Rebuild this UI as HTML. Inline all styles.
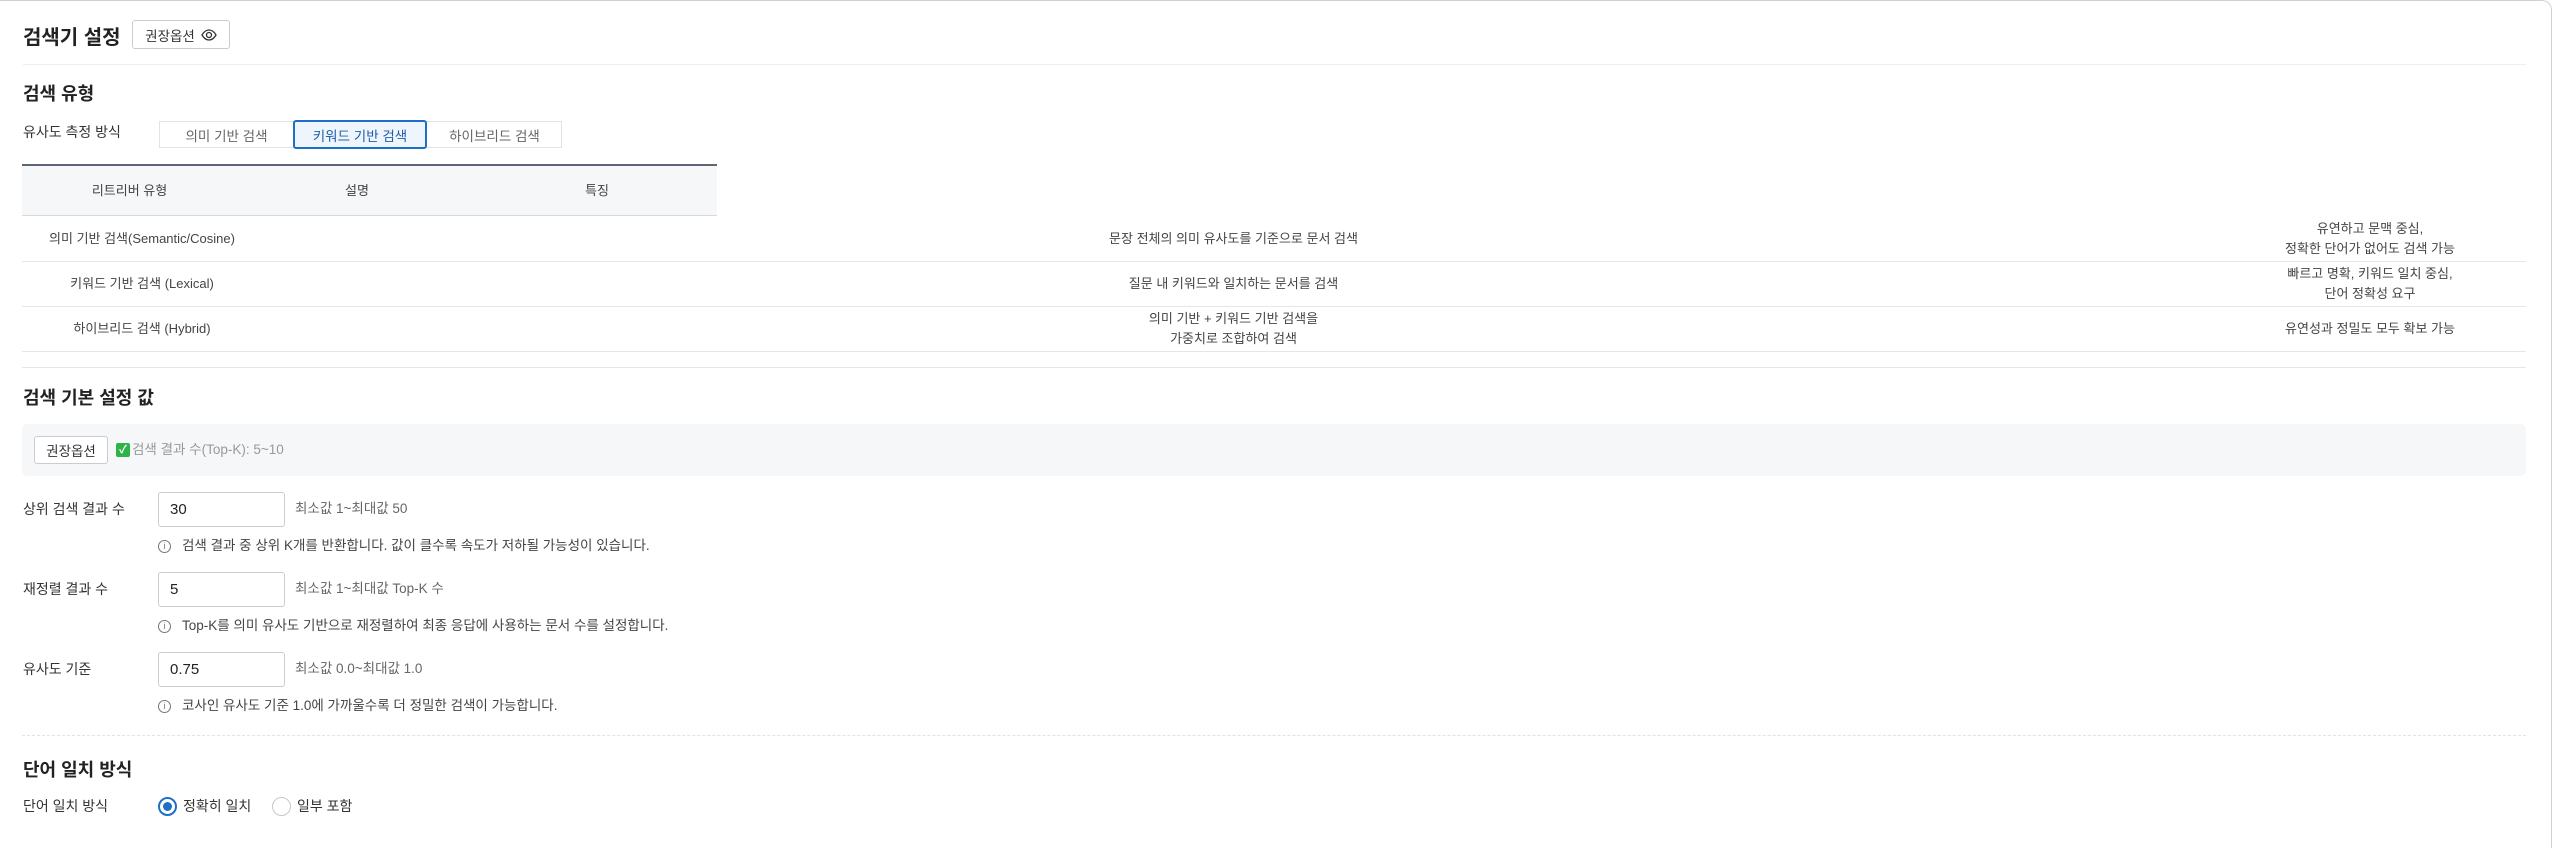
<!DOCTYPE html>
<html style="overflow:hidden;height:848px"><head><meta charset="utf-8"><style>
*{box-sizing:border-box;margin:0;padding:0}
body{width:2554px;height:848px;background:#fff;font-family:"Liberation Sans","Noto Sans CJK KR",sans-serif;color:#333;position:relative;overflow:hidden}
.abs{position:absolute;white-space:nowrap}
.frame{position:absolute;left:-4px;top:0;width:2556px;height:848px;border:1.5px solid #cdd2da;border-bottom:none;border-top-right-radius:10px}
.h1{font-size:20px;font-weight:bold;color:#222}
.h2{font-size:18px;font-weight:bold;color:#222}
.lbl{font-size:14px;color:#333;line-height:20px}
.btn{position:absolute;border:1px solid #c9cdd3;border-radius:3px;background:#fff;font-size:13.5px;color:#333;display:flex;align-items:center;justify-content:center}
.line{position:absolute;height:1px;background:#e3e6ea}
.cell{position:absolute;font-size:13px;color:#444;text-align:center;line-height:20px;display:flex;align-items:center;justify-content:center}
.inp{position:absolute;width:127px;height:35px;border:1px solid #c9cdd3;border-radius:3px;font-size:15px;color:#222;padding-left:11px;line-height:33px}
.hint{font-size:13.5px;color:#666;line-height:20px}
.info{font-size:13.5px;color:#444;display:flex;align-items:center;line-height:20px}
.ic{display:inline-block;width:13px;height:13px;border:1px solid #777;border-radius:50%;font-size:9px;line-height:11px;text-align:center;color:#777;margin-right:11px}
.tab{position:absolute;top:121px;height:27px;font-size:13.5px;color:#666;display:flex;align-items:center;justify-content:center}
</style></head><body>
<div class="frame"></div>
<div class="abs h1" style="left:23px;top:21px">검색기 설정</div>
<div class="btn" style="left:132px;top:20px;width:98px;height:29px;gap:6px">권장옵션 <svg width="16" height="12" viewBox="0 0 16 12"><path d="M1 6C3 2.5 5.5 1 8 1s5 1.5 7 5c-2 3.5-4.5 5-7 5S3 9.5 1 6z" fill="none" stroke="#333" stroke-width="1.3"/><circle cx="8" cy="6" r="2.5" fill="none" stroke="#333" stroke-width="1.3"/></svg></div>
<div class="line" style="left:23px;top:64px;width:2503px;background:#eceef1"></div>
<div class="abs h2" style="left:23px;top:80px">검색 유형</div>
<div class="abs lbl" style="left:23px;top:122px">유사도 측정 방식</div>
<div style="position:absolute;left:159px;top:121px;width:403px;height:27px;border:1px solid #e0e3e8"></div>
<div class="tab" style="left:159px;width:135px">의미 기반 검색</div>
<div class="tab" style="left:293px;top:120px;width:134px;height:29px;border:2px solid #1f6fc5;border-radius:3px;background:#eef5fd;color:#1f5fa8">키워드 기반 검색</div>
<div class="tab" style="left:427px;width:135px">하이브리드 검색</div>
<div style="position:absolute;left:22px;top:164px;width:695px;height:52px;background:#f6f7f9;border-top:2px solid #5d6677;border-bottom:1px solid #d5d9df"></div>
<div class="cell" style="left:22px;top:165px;width:215px;height:51px">리트리버 유형</div>
<div class="cell" style="left:237px;top:165px;width:240px;height:51px">설명</div>
<div class="cell" style="left:477px;top:165px;width:240px;height:51px">특징</div>
<div class="cell" style="left:22px;top:216px;width:240px;height:45px">의미 기반 검색(Semantic/Cosine)</div>
<div class="cell" style="left:262px;top:216px;width:1943px;height:45px">문장 전체의 의미 유사도를 기준으로 문서 검색</div>
<div class="cell" style="left:2205px;top:216px;width:330px;height:45px">유연하고 문맥 중심,<br>정확한 단어가 없어도 검색 가능</div>
<div class="line" style="left:22px;top:261px;width:2504px"></div>
<div class="cell" style="left:22px;top:261px;width:240px;height:45px">키워드 기반 검색 (Lexical)</div>
<div class="cell" style="left:262px;top:261px;width:1943px;height:45px">질문 내 키워드와 일치하는 문서를 검색</div>
<div class="cell" style="left:2205px;top:261px;width:330px;height:45px">빠르고 명확, 키워드 일치 중심,<br>단어 정확성 요구</div>
<div class="line" style="left:22px;top:306px;width:2504px"></div>
<div class="cell" style="left:22px;top:306px;width:240px;height:45px">하이브리드 검색 (Hybrid)</div>
<div class="cell" style="left:262px;top:306px;width:1943px;height:45px">의미 기반 + 키워드 기반 검색을<br>가중치로 조합하여 검색</div>
<div class="cell" style="left:2205px;top:306px;width:330px;height:45px">유연성과 정밀도 모두 확보 가능</div>
<div class="line" style="left:22px;top:351px;width:2504px"></div>
<div class="line" style="left:22px;top:367px;width:2504px"></div>
<div class="abs h2" style="left:23px;top:384px">검색 기본 설정 값</div>
<div style="position:absolute;left:22px;top:424px;width:2504px;height:52px;background:#f6f7f9;border-radius:5px"></div>
<div class="btn" style="left:34px;top:436px;width:74px;height:28px">권장옵션</div>
<div class="abs" style="left:116px;top:440px;font-size:13.5px;color:#999;display:flex;align-items:center;gap:2px;line-height:20px"><span style="display:inline-block;width:14px;height:14px;background:#2eb24a;border-radius:2px;color:#fff;font-size:11px;line-height:14px;text-align:center;font-weight:bold">✓</span>검색 결과 수(Top-K): 5~10</div>

<div class="abs lbl" style="left:23px;top:499px">상위 검색 결과 수</div>
<div class="inp" style="left:158px;top:492px">30</div>
<div class="abs hint" style="left:295px;top:499px">최소값 1~최대값 50</div>
<div class="abs info" style="left:158px;top:536px"><span class="ic">i</span>검색 결과 중 상위 K개를 반환합니다. 값이 클수록 속도가 저하될 가능성이 있습니다.</div>

<div class="abs lbl" style="left:23px;top:579px">재정렬 결과 수</div>
<div class="inp" style="left:158px;top:572px">5</div>
<div class="abs hint" style="left:295px;top:579px">최소값 1~최대값 Top-K 수</div>
<div class="abs info" style="left:158px;top:616px"><span class="ic">i</span>Top-K를 의미 유사도 기반으로 재정렬하여 최종 응답에 사용하는 문서 수를 설정합니다.</div>

<div class="abs lbl" style="left:23px;top:659px">유사도 기준</div>
<div class="inp" style="left:158px;top:652px">0.75</div>
<div class="abs hint" style="left:295px;top:659px">최소값 0.0~최대값 1.0</div>
<div class="abs info" style="left:158px;top:696px"><span class="ic">i</span>코사인 유사도 기준 1.0에 가까울수록 더 정밀한 검색이 가능합니다.</div>

<div style="position:absolute;left:22px;top:735px;width:2504px;border-top:1px dashed #dfe2e6"></div>
<div class="abs h2" style="left:23px;top:756px">단어 일치 방식</div>
<div class="abs lbl" style="left:23px;top:796px">단어 일치 방식</div>
<div style="position:absolute;left:158px;top:797px;width:19px;height:19px;border:2px solid #1f6fc5;border-radius:50%"><div style="position:absolute;left:3px;top:3px;width:9px;height:9px;background:#1f6fc5;border-radius:50%"></div></div>
<div class="abs lbl" style="left:183px;top:796px">정확히 일치</div>
<div style="position:absolute;left:272px;top:797px;width:19px;height:19px;border:1px solid #c4c8ce;border-radius:50%"></div>
<div class="abs lbl" style="left:297px;top:796px">일부 포함</div>
</body></html>
